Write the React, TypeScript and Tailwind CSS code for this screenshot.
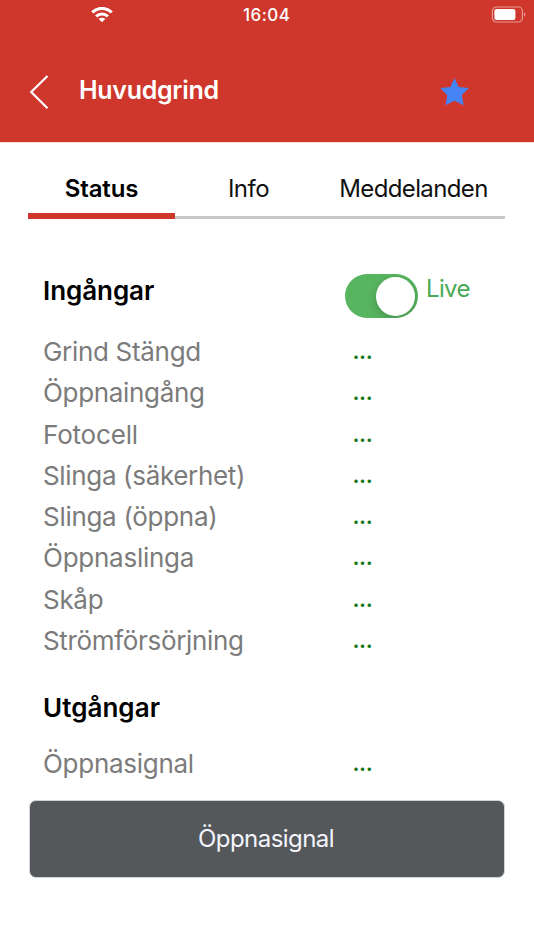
const inputs = [
  { name: "Grind Stängd", tracking: "tracking-[-0.31px]" },
  { name: "Öppnaingång", tracking: "tracking-[-0.33px]" },
  { name: "Fotocell", tracking: "tracking-[-0.18px]" },
  { name: "Slinga (säkerhet)", tracking: "tracking-[-0.34px]" },
  { name: "Slinga (öppna)", tracking: "tracking-[-0.3px]" },
  { name: "Öppnaslinga", tracking: "tracking-[-0.25px]" },
  { name: "Skåp", tracking: "tracking-[-0.3px]" },
  { name: "Strömförsörjning", tracking: "tracking-[-0.33px]" },
];

function Row({ name, tracking }: { name: string; tracking: string }) {
  return (
    <div className="flex h-[41.3px] items-center leading-[41px]">
      <span className={`w-[309.4px] whitespace-nowrap text-[26px] text-[#7b7b7b] ${tracking}`}>{name}</span>
      <span className="text-[22px] font-semibold leading-[39px] tracking-[-0.3px] text-[#16781a]">...</span>
    </div>
  );
}

export default function App() {
  return (
    <div className="h-[950px] w-[534px] overflow-hidden bg-white font-['Inter',sans-serif]">
      <header className="h-[142px] bg-[#cf372c] text-white">
        <div className="flex h-[30px] items-center">
          <svg className="ml-[91px] h-[16px] w-[22px]" viewBox="0 0 22 16" fill="none" stroke="white" strokeWidth="3.1">
            <path d="M1.3 5.4A13.7 13.7 0 0 1 20.7 5.4" />
            <path d="M5.1 9.4A8.4 8.4 0 0 1 16.9 9.4" />
            <path d="M11 15.3L7.7 12A4.7 4.7 0 0 1 14.3 12Z" fill="white" stroke="none" />
          </svg>
          <span className="ml-[130px] mt-[2px] w-[52px] text-[17px] font-medium tracking-[0.45px]">16:04</span>
          <svg className="ml-[196px] mt-[-1px] h-[18px] w-[36px]" viewBox="0 0 36 18">
            <rect x="1.4" y="1" width="30" height="15" rx="4" fill="none" stroke="#e79b95" strokeWidth="1.2" />
            <rect x="3.4" y="3" width="21" height="11" rx="2" fill="white" />
            <path d="M33 6.6v4q1.3-.5 1.3-2T33 6.6Z" fill="#e79b95" />
          </svg>
        </div>
        <div className="flex h-[112px] pt-[42px]">
          <svg className="ml-[29px] mt-[2px] h-[36px] w-[22px]" viewBox="0 0 22 36" fill="none" stroke="white" strokeWidth="2.2">
            <path d="M18.5 2L2.2 18L18.5 34.2" />
          </svg>
          <h1 className="ml-[28px] w-[333px] text-[25px] font-semibold leading-[37px] tracking-[-0.3px]">Huvudgrind</h1>
          <svg className="ml-[28px] mt-[5px] h-[29px] w-[30px]" viewBox="0 0 30 29">
            <path fill="#4684f5" d="M14.5 .9L18.8 10L29 11L21.7 18.2L23.8 28.2L14.5 23.7L5.4 28.2L7.3 18.2L.2 11L10.3 10Z" />
          </svg>
        </div>
      </header>
      <div className="h-px bg-[#f9dfdd]" />

      <nav className="mx-[28px] grid h-[76px] grid-cols-[147px_147px_183px] text-center text-[24px] leading-[91px] text-[#111]">
        <div className="h-[76px] border-b-[6px] border-[#cf372c] font-semibold tracking-[-0.15px] text-black">Status</div>
        <div className="h-[76px] border-b-[3px] border-[#c8c8c8] tracking-[-0.5px]">Info</div>
        <div className="h-[76px] border-b-[3px] border-[#c8c8c8] tracking-[-0.62px]">Meddelanden</div>
      </nav>

      <main className="ml-[43px] pt-[54px]">
        <div className="flex h-[57.8px]">
          <h2 className="w-[302px] text-[26px] font-semibold leading-[36px] tracking-[-0.06px] text-black">Ingångar</h2>
          <div className="mt-px flex h-[44px] w-[73px] items-center justify-end overflow-hidden rounded-full bg-[#57b45f] pr-[3px]">
            <div className="size-[39px] rounded-full bg-white shadow-[0_3px_9px_rgba(0,0,0,0.2)]" />
          </div>
          <span className="ml-[8px] text-[24px] leading-[32px] tracking-[-0.65px] text-[#48aa57]">Live</span>
        </div>
        {inputs.map((item) => <Row key={item.name} {...item} />)}
        <h2 className="mt-[27.6px] h-[53.6px] text-[26px] font-semibold leading-[38px] tracking-[0.04px] text-black">Utgångar</h2>
        <Row name="Öppnasignal" tracking="tracking-[-0.28px]" />
      </main>
      <button className="ml-[29px] mt-[16px] block h-[78px] w-[476px] rounded-[7px] border border-[#cfd2d8] bg-[#54585b] pr-[2px] text-[24px] tracking-[-0.55px] text-[#f4f4fc]">Öppnasignal</button>
    </div>
  );
}
